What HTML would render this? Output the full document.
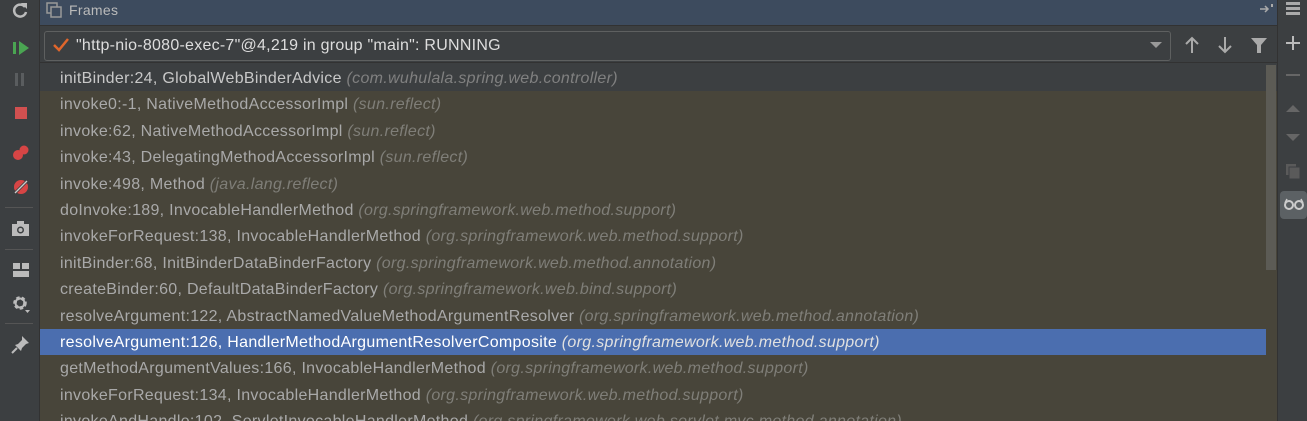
<!DOCTYPE html>
<html><head><style>
html,body{margin:0;width:1307px;height:421px;overflow:hidden}
body{background:#3c3f41;font-family:"Liberation Sans",sans-serif;position:relative}
.lt{position:absolute;left:0;top:0;width:39px;height:421px;background:#3c3f41;border-right:1px solid #323232}
.rt{position:absolute;left:1277px;top:0;width:30px;height:421px;background:#3c3f41;border-left:1px solid #323232}
.hdr{position:absolute;left:40px;top:0;width:1237px;height:25px;background:#3d4b5e;border-bottom:1px solid #323232}
.hdr span{position:absolute;left:29px;top:2px;color:#bbb;font-size:14px;letter-spacing:0.3px}
.combo{position:absolute;left:44px;top:31px;width:1125px;height:28px;border:1px solid #5e6060;border-radius:3px;background:#3c3f41}
.combo span{position:absolute;left:31px;top:5px;color:#ddd;font-size:16px;letter-spacing:0.25px}
.list{position:absolute;left:40px;top:65px;width:1237px;height:356px;background:#48453a}
.row{position:absolute;left:0;width:1226px;height:26.4px;line-height:28px;font-size:16px;letter-spacing:0.3px;color:#a9a9a9;padding-left:20px;box-sizing:border-box;white-space:nowrap;overflow:hidden}
.row i{color:#7f7e78}
.sel{background:#4b6eaf;color:#fff}
.sel i{color:#e0e0e0}
.first{background:#3c3f41;color:#c8c8c8;width:1237px}
.first i{color:#808080}
.sb{position:absolute;left:1226px;top:0;width:10px;height:205px;background:#5c5b55}
svg{position:absolute}
</style></head><body>
<div class="lt"></div>
<div class="rt"></div>
<div class="hdr"><span>Frames</span></div>
<svg style="left:46px;top:2px" width="16" height="16"><rect x="1" y="1" width="10" height="10" fill="none" stroke="#999" stroke-width="1.5"/><rect x="5" y="5" width="10" height="10" fill="#3d4b5e" stroke="#999" stroke-width="1.5"/></svg>
<div class="combo"><span>"http-nio-8080-exec-7"@4,219 in group "main": RUNNING</span></div>
<svg style="left:52px;top:37px" width="18" height="16"><path d="M2 8l5 5 9-11" fill="none" stroke="#e0662c" stroke-width="2.5"/></svg>
<svg style="left:1150px;top:42px" width="12" height="8"><path d="M0 0h12L6 6z" fill="#999"/></svg>
<svg style="left:1184px;top:36px" width="16" height="18"><path d="M8 2v15M2 8l6-6 6 6" fill="none" stroke="#aaa" stroke-width="2"/></svg>
<svg style="left:1217px;top:36px" width="16" height="18"><path d="M8 1v15M2 10l6 6 6-6" fill="none" stroke="#aaa" stroke-width="2"/></svg>
<svg style="left:1250px;top:36px" width="18" height="18"><path d="M1 2h16l-6 7v8h-4v-8z" fill="#aaa"/></svg>
<svg style="left:1259px;top:3px" width="16" height="12"><path d="M1 6h8M6 3l3 3-3 3" fill="none" stroke="#aaa" stroke-width="1.5"/><rect x="12" y="1" width="2" height="3" fill="#aaa"/></svg>
<svg style="left:1285px;top:1px" width="16" height="16"><rect x="1" y="1" width="14" height="3" fill="#aaa"/><rect x="1" y="6" width="14" height="3" fill="#aaa"/><rect x="1" y="11" width="14" height="3" fill="#aaa"/></svg>
<svg style="left:1285px;top:35px" width="16" height="16"><path d="M8 1v14M1 8h14" stroke="#bbb" stroke-width="2"/></svg>
<svg style="left:1285px;top:70px" width="16" height="10"><path d="M1 5h14" stroke="#666" stroke-width="2"/></svg>
<svg style="left:1285px;top:103px" width="16" height="10"><path d="M1 9l7-7 7 7z" fill="#666"/></svg>
<svg style="left:1285px;top:133px" width="16" height="10"><path d="M1 1l7 7 7-7z" fill="#666"/></svg>
<svg style="left:1285px;top:163px" width="16" height="18"><rect x="1" y="1" width="10" height="11" fill="#5a5a5a"/><rect x="4" y="4" width="11" height="12" fill="#5a5a5a" stroke="#3c3f41"/></svg>
<div style="position:absolute;left:1280px;top:191px;width:27px;height:28px;background:#5c6164;border-radius:4px"></div>
<svg style="left:1283px;top:197px" width="22" height="14"><circle cx="6" cy="8" r="4" fill="none" stroke="#ccc" stroke-width="2"/><circle cx="16" cy="8" r="4" fill="none" stroke="#ccc" stroke-width="2"/><path d="M2 6L4 2M20 6L18 2" stroke="#ccc" stroke-width="1.5"/></svg>
<svg style="left:11px;top:1px" width="18" height="18"><path d="M14 6A6 6 0 1 0 15 11" fill="none" stroke="#bbb" stroke-width="2.5"/><path d="M10 2h6v6z" fill="#bbb"/></svg>
<svg style="left:12px;top:40px" width="20" height="16"><rect x="1" y="2" width="3" height="12" fill="#4aa552"/><path d="M7 1l10 7-10 7z" fill="#4aa552"/></svg>
<svg style="left:14px;top:72px" width="12" height="16"><rect x="1" y="1" width="3" height="13" fill="#5a5d5f"/><rect x="7" y="1" width="3" height="13" fill="#5a5d5f"/></svg>
<svg style="left:14px;top:106px" width="14" height="14"><rect x="1" y="1" width="12" height="12" fill="#d15050"/></svg>
<svg style="left:12px;top:144px" width="18" height="18"><circle cx="6" cy="11" r="5" fill="#d64545"/><circle cx="12" cy="6" r="4.5" fill="#d64545"/></svg>
<svg style="left:12px;top:178px" width="18" height="18"><circle cx="9" cy="9" r="7" fill="#d64545"/><path d="M2 16L16 2" stroke="#3c3f41" stroke-width="3"/><path d="M3 15L15 3" stroke="#ccc" stroke-width="1.3"/></svg>
<div style="position:absolute;left:5px;top:207px;width:28px;height:1px;background:#555"></div>
<svg style="left:11px;top:220px" width="20" height="18"><rect x="1" y="4" width="17" height="12" fill="#bbb"/><rect x="6" y="1" width="7" height="4" fill="#bbb"/><circle cx="9.5" cy="10" r="3.5" fill="#3c3f41"/><circle cx="9.5" cy="10" r="2" fill="#bbb"/></svg>
<div style="position:absolute;left:5px;top:249px;width:28px;height:1px;background:#555"></div>
<svg style="left:12px;top:262px" width="18" height="16"><rect x="1" y="1" width="7" height="6" fill="#bbb"/><rect x="10" y="1" width="7" height="6" fill="#bbb"/><rect x="1" y="9" width="16" height="6" fill="#bbb"/></svg>
<svg style="left:11px;top:294px" width="20" height="20"><circle cx="9" cy="9" r="5" fill="none" stroke="#bbb" stroke-width="3.5" stroke-dasharray="3 2"/><circle cx="9" cy="9" r="4.5" fill="none" stroke="#bbb" stroke-width="2"/><path d="M14 16h5l-2.5 3z" fill="#bbb"/></svg>
<div style="position:absolute;left:5px;top:323px;width:28px;height:1px;background:#555"></div>
<svg style="left:11px;top:335px" width="20" height="20"><path d="M11 1l7 7-3 1-4 4-1 3-6-6 3-1 4-4z" fill="#bbb"/><path d="M6 13l-5 5" stroke="#bbb" stroke-width="2"/></svg>
<div style="position:absolute;left:40px;top:62px;width:1237px;height:1px;background:#323232"></div>
<div class="list">
<div class="row first" style="top:0">initBinder:24, GlobalWebBinderAdvice <i>(com.wuhulala.spring.web.controller)</i></div>
<div class="row" style="top:26.4px">invoke0:-1, NativeMethodAccessorImpl <i>(sun.reflect)</i></div>
<div class="row" style="top:52.8px">invoke:62, NativeMethodAccessorImpl <i>(sun.reflect)</i></div>
<div class="row" style="top:79.2px">invoke:43, DelegatingMethodAccessorImpl <i>(sun.reflect)</i></div>
<div class="row" style="top:105.6px">invoke:498, Method <i>(java.lang.reflect)</i></div>
<div class="row" style="top:132px">doInvoke:189, InvocableHandlerMethod <i>(org.springframework.web.method.support)</i></div>
<div class="row" style="top:158.4px">invokeForRequest:138, InvocableHandlerMethod <i>(org.springframework.web.method.support)</i></div>
<div class="row" style="top:184.8px">initBinder:68, InitBinderDataBinderFactory <i>(org.springframework.web.method.annotation)</i></div>
<div class="row" style="top:211.2px">createBinder:60, DefaultDataBinderFactory <i>(org.springframework.web.bind.support)</i></div>
<div class="row" style="top:237.6px">resolveArgument:122, AbstractNamedValueMethodArgumentResolver <i>(org.springframework.web.method.annotation)</i></div>
<div class="row sel" style="top:264px">resolveArgument:126, HandlerMethodArgumentResolverComposite <i>(org.springframework.web.method.support)</i></div>
<div class="row" style="top:290.4px">getMethodArgumentValues:166, InvocableHandlerMethod <i>(org.springframework.web.method.support)</i></div>
<div class="row" style="top:316.8px">invokeForRequest:134, InvocableHandlerMethod <i>(org.springframework.web.method.support)</i></div>
<div class="row" style="top:343.2px">invokeAndHandle:102, ServletInvocableHandlerMethod <i>(org.springframework.web.servlet.mvc.method.annotation)</i></div>
<div class="sb"></div>
</div>
</body></html>
